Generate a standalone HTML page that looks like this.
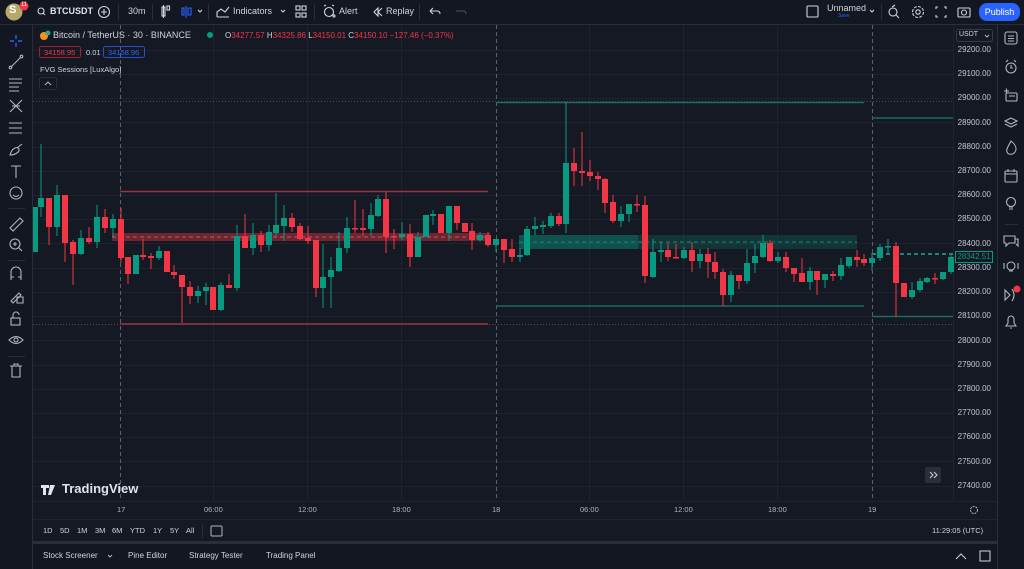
<!DOCTYPE html>
<html><head><meta charset="utf-8"><style>
*{margin:0;padding:0;box-sizing:border-box}
body{width:1024px;height:569px;background:#2a2e39;font-family:"Liberation Sans",sans-serif;color:#d1d4dc;overflow:hidden;position:relative;font-size:9px}
.a{position:absolute;white-space:nowrap}
svg{position:absolute}
</style></head><body>
<div class="a" style="left:0;top:0;width:1024px;height:24px;background:#131722"></div>
<div class="a" style="left:0;top:25px;width:32px;height:544px;background:#131722"></div>
<div class="a" style="left:998px;top:25px;width:26px;height:544px;background:#131722"></div>
<div class="a" style="left:33px;top:25px;width:964px;height:516px;background:#151924"></div>
<div class="a" style="left:33px;top:544px;width:964px;height:25px;background:#131722"></div>

<svg width="1024" height="569" style="left:0;top:0">
 <g stroke="#1f2330" stroke-width="1">
  <path d="M33 50.5H953M33 74.5H953M33 98.5H953M33 122.5H953M33 147.5H953M33 171.5H953M33 195.5H953M33 219.5H953M33 243.5H953M33 268.5H953M33 292.5H953M33 316.5H953M33 340.5H953M33 365.5H953M33 389.5H953M33 413.5H953M33 437.5H953M33 461.5H953M33 486.5H953"/>
  <path d="M213.5 25V500M307.5 25V500M401.5 25V500M589.5 25V500M683.5 25V500M777.5 25V500"/>
  <path d="M33 501.5H997M953.5 25V501M33 519.5H997"/>
 </g>
 <g stroke="#5d606b" stroke-dasharray="4 3"><path d="M120.5 25V500M496.5 25V500M872.5 25V500"/></g>
 <g stroke="#4a4e5a" stroke-dasharray="1 2"><path d="M33 101.5H953M33 324.5H953"/></g>
 <g stroke="#9a3440" stroke-width="1.5"><path d="M120 191.5H488M120 324H488"/></g>
 <rect x="112" y="233" width="378" height="8" fill="#f23645" opacity="0.4"/>
 <path d="M112 237H490" stroke="#e06b75" stroke-dasharray="4 3" opacity="0.7"/>
 <g stroke="#1d6b5e" stroke-width="1.5"><path d="M496 102.5H864M496 306H864M872 118H953M872 316.5H953"/></g>
 <rect x="519" y="235" width="119" height="14" fill="#089981" opacity="0.45"/>
 <rect x="638" y="235" width="219" height="14" fill="#089981" opacity="0.22"/>
 <path d="M519 242H857" stroke="#1a8a76" stroke-dasharray="4 3"/>
 <path d="M872 254H953" stroke="#1a8a76" stroke-width="2" stroke-dasharray="4 3"/>
 <g fill="#089981" stroke="#089981">
 <path stroke-width="1" d="M41 144V217M57 185V236M81 230V255M97 205V248M113 214V238M159 246V260M198 286V303M206 283V305M221 282V311M237 225V291M253 223V255M269 225V251M276 193V237M284 205V241M323 244V308M331 257V308M339 232V272M347 217V253M371 203V236M378 195V217M402 222V240M418 232V257M433 210V225M449 206V241M480 232V242M496 239V252M520 248V262M527 226V256M535 217V235M543 221V234M551 213V228M566 102V233M621 206V227M629 204V222M653 239V278M661 242V262M684 247V259M700 249V268M731 271V302M747 249V284M755 244V273M763 235V258M778 252V263M810 267V290M825 274V288M841 258V280M849 257V268M872 253V271M880 244V261M888 239V255M912 282V299M920 278V292M927 277V283M943 272V280M951 255V274"/>
 <g stroke="none">
 <rect x="33" y="207" width="5" height="45"/><rect x="38" y="198" width="6" height="9"/><rect x="54" y="195" width="6" height="32"/><rect x="78" y="238" width="6" height="16"/><rect x="94" y="217" width="6" height="25"/><rect x="110" y="219" width="6" height="9"/><rect x="133" y="255" width="6" height="19"/><rect x="156" y="251" width="6" height="7"/><rect x="195" y="291" width="6" height="5"/><rect x="203" y="287" width="6" height="4"/><rect x="218" y="285" width="6" height="25"/><rect x="234" y="236" width="6" height="52"/><rect x="250" y="235" width="6" height="13"/><rect x="266" y="232" width="6" height="13"/><rect x="273" y="225" width="6" height="8"/><rect x="281" y="218" width="6" height="8"/><rect x="320" y="277" width="6" height="11"/><rect x="328" y="270" width="6" height="7"/><rect x="336" y="248" width="6" height="23"/><rect x="344" y="228" width="6" height="20"/><rect x="368" y="215" width="6" height="14"/><rect x="375" y="199" width="6" height="17"/><rect x="399" y="234" width="6" height="3"/><rect x="415" y="237" width="6" height="20"/><rect x="423" y="215" width="6" height="22"/><rect x="430" y="214" width="6" height="2"/><rect x="446" y="206" width="6" height="27"/><rect x="477" y="235" width="6" height="5"/><rect x="493" y="239" width="6" height="6"/><rect x="517" y="255" width="6" height="2"/><rect x="524" y="229" width="6" height="26"/><rect x="532" y="226" width="6" height="3"/><rect x="540" y="225" width="6" height="2"/><rect x="548" y="216" width="6" height="10"/><rect x="563" y="163" width="6" height="61"/><rect x="618" y="214" width="6" height="7"/><rect x="626" y="204" width="6" height="10"/><rect x="650" y="252" width="6" height="25"/><rect x="658" y="250" width="6" height="2"/><rect x="681" y="250" width="6" height="8"/><rect x="697" y="254" width="6" height="7"/><rect x="728" y="275" width="6" height="20"/><rect x="744" y="263" width="6" height="18"/><rect x="752" y="256" width="6" height="7"/><rect x="760" y="243" width="6" height="14"/><rect x="775" y="257" width="6" height="4"/><rect x="807" y="271" width="6" height="11"/><rect x="822" y="274" width="6" height="6"/><rect x="838" y="265" width="6" height="11"/><rect x="846" y="257" width="6" height="9"/><rect x="869" y="258" width="6" height="5"/><rect x="877" y="247" width="6" height="11"/><rect x="885" y="246" width="6" height="1.5"/><rect x="909" y="290" width="6" height="7"/><rect x="917" y="281" width="6" height="9"/><rect x="924" y="278" width="6" height="4"/><rect x="940" y="272" width="6" height="7"/><rect x="948" y="257" width="6" height="15"/>
 </g></g>
 <g fill="#f23645" stroke="#f23645">
 <path stroke-width="1" d="M49 198V245M65 195V262M73 240V285M89 227V244M105 209V233M121 208V263M128 257V284M143 239V260M151 253V269M174 265V279M182 275V323M190 281V304M229 274V288M245 214V248M261 231V252M292 213V232M300 223V240M308 226V244M316 240V297M355 200V233M363 209V237M386 192V253M394 229V249M410 224V267M457 206V230M472 223V250M488 232V247M504 239V263M512 239V262M559 213V226M574 148V186M582 132V186M590 160V181M598 172V190M605 178V213M613 195V223M637 195V212M645 196V283M668 243V261M676 244V258M692 242V272M708 248V278M715 252V279M723 269V306M739 275V289M770 240V262M786 252V272M794 268V282M802 258V282M817 271V295M833 271V281M857 250V267M864 254V266M896 242V317M935 273V284"/>
 <g stroke="none">
 <rect x="46" y="198" width="6" height="29"/><rect x="62" y="195" width="6" height="48"/><rect x="70" y="242" width="6" height="12"/><rect x="86" y="238" width="6" height="4"/><rect x="102" y="217" width="6" height="11"/><rect x="118" y="219" width="6" height="39"/><rect x="125" y="257" width="6" height="17"/><rect x="140" y="255" width="6" height="2"/><rect x="148" y="256" width="6" height="2"/><rect x="164" y="251" width="6" height="21"/><rect x="171" y="272" width="6" height="3"/><rect x="179" y="275" width="6" height="12"/><rect x="187" y="287" width="6" height="9"/><rect x="210" y="287" width="6" height="23"/><rect x="226" y="285" width="6" height="3"/><rect x="242" y="236" width="6" height="12"/><rect x="258" y="235" width="6" height="10"/><rect x="289" y="218" width="6" height="9"/><rect x="297" y="226" width="6" height="13"/><rect x="305" y="238" width="6" height="3"/><rect x="313" y="240" width="6" height="48"/><rect x="352" y="228" width="6" height="1.5"/><rect x="360" y="228" width="6" height="2"/><rect x="383" y="199" width="6" height="38"/><rect x="391" y="236" width="6" height="1.5"/><rect x="407" y="234" width="6" height="23"/><rect x="438" y="214" width="6" height="19"/><rect x="454" y="206" width="6" height="17"/><rect x="462" y="223" width="6" height="9"/><rect x="469" y="231" width="6" height="9"/><rect x="485" y="235" width="6" height="10"/><rect x="501" y="239" width="6" height="11"/><rect x="509" y="249" width="6" height="8"/><rect x="556" y="216" width="6" height="8"/><rect x="571" y="163" width="6" height="8"/><rect x="579" y="171" width="6" height="2"/><rect x="587" y="172" width="6" height="4"/><rect x="595" y="176" width="6" height="3"/><rect x="602" y="179" width="6" height="24"/><rect x="610" y="202" width="6" height="19"/><rect x="634" y="204" width="6" height="1.5"/><rect x="642" y="205" width="6" height="71"/><rect x="665" y="250" width="6" height="7"/><rect x="673" y="257" width="6" height="1.5"/><rect x="689" y="250" width="6" height="11"/><rect x="705" y="254" width="6" height="8"/><rect x="712" y="262" width="6" height="10"/><rect x="720" y="272" width="6" height="23"/><rect x="736" y="275" width="6" height="6"/><rect x="767" y="243" width="6" height="18"/><rect x="783" y="257" width="6" height="11"/><rect x="791" y="268" width="6" height="6"/><rect x="799" y="273" width="6" height="9"/><rect x="814" y="271" width="6" height="9"/><rect x="830" y="274" width="6" height="2"/><rect x="854" y="257" width="6" height="3"/><rect x="861" y="259" width="6" height="4"/><rect x="893" y="246" width="6" height="37"/><rect x="901" y="283" width="6" height="14"/><rect x="932" y="278" width="6" height="1.5"/>
 </g></g>
 <rect x="955.5" y="251.5" width="37" height="11" fill="#151924" stroke="#089981"/>
 <g fill="none" stroke="#b2b5be" stroke-width="1.1">
  <path d="M16 35V39M16 43V47M10 41H14M18 41H22" stroke="#2962ff" stroke-width="1.4"/>
  <path d="M11 67L21 57"/><circle cx="10.5" cy="67.5" r="1.3"/><circle cx="21.5" cy="56.5" r="1.3"/>
  <path d="M9 79H22M9 83H22M9 87H19M9 91H19"/>
  <path d="M10 100L22 112M22 100L10 112M12 106H20"/>
  <path d="M9 123H22M9 128H22M9 133H22"/>
  <path d="M10 155C12 148 17 146 19 149C20 152 15 155 10 155ZM17 148L22 144"/>
  <path d="M11 166H21M16 166V178"/>
  <circle cx="16" cy="193" r="6"/><path d="M13 195Q16 198 19 195"/>
  <path d="M10 228L20 218L23 221L13 231Z"/>
  <circle cx="15" cy="244" r="5"/><path d="M19 248L22 251M13 244H17M15 242V246"/>
  <path d="M11 280V272A5 5 0 0 1 21 272V280M11 277H14M18 277H21"/>
  <path d="M11 301L19 293L21 295L13 303ZM17 297H23V303H17Z"/>
  <rect x="11" y="318" width="9" height="7"/><path d="M13 318V315A3 3 0 0 1 19 315"/>
  <path d="M9 340Q16 333 23 340Q16 347 9 340Z"/><circle cx="16" cy="340" r="2"/>
  <path d="M10 366H22M12 366V377H20V366M14 366V364H18V366"/>
 </g>
 <g stroke="#2a2e39"><path d="M8 208.5H25M8 260.5H25M8 356.5H25M1005 224.5H1018"/></g>
 <g fill="none" stroke="#b2b5be" stroke-width="1.1">
  <rect x="1005" y="32" width="12" height="12" rx="2"/><path d="M1008 36H1014M1008 38.5H1014M1008 41H1014"/>
  <circle cx="1011" cy="68" r="5"/><path d="M1011 65V68H1013M1006 62L1008 60M1016 62L1014 60"/>
  <rect x="1006" y="93" width="11" height="8" rx="1"/><path d="M1004 91H1009M1006.5 88.5V93.5M1009 96H1015"/>
  <path d="M1005 121L1011 118L1017 121L1011 124ZM1005 124L1011 127L1017 124"/>
  <path d="M1011 141C1016 145 1017 149 1015 152C1013 155 1008 155 1007 152C1006 149 1008 147 1011 141Z"/>
  <rect x="1005" y="171" width="12" height="11" rx="1"/><path d="M1005 174H1017M1008 169V172M1014 169V172"/>
  <circle cx="1011" cy="202" r="4.5"/><path d="M1009 207H1013M1009 209H1013"/>
  <path d="M1004 236H1015V243H1009L1006 246V243H1004ZM1015 239H1018V246L1016 244"/>
  <circle cx="1011" cy="266" r="4"/><path d="M1009 271H1013M1004 263V269M1018 263V269"/>
  <path d="M1005 290L1010 295L1005 300ZM1012 289Q1016 295 1012 301"/>
  <path d="M1006 326H1016L1014 323V319A3 3 0 0 0 1008 319V323ZM1010 328H1012"/>
 </g>
 <circle cx="1017" cy="289" r="3.5" fill="#f23645"/>
 <circle cx="14" cy="12" r="8.5" fill="#b5a96a"/>
 <circle cx="24" cy="6" r="4.5" fill="#f23645"/>
 <g fill="none" stroke="#d1d4dc" stroke-width="1.1">
  <circle cx="41" cy="11" r="3"/><path d="M43 13L45 15"/>
  <circle cx="104" cy="12" r="5.5"/><path d="M104 9V15M101 12H107"/>
  <rect x="162" y="7" width="3" height="9"/><path d="M163.5 5V18"/><rect x="167" y="6" width="2.5" height="4"/>
  <path d="M198 10L200 12L202 10M281 10L283 12L285 10M870 10L872 12L874 10"/>
  <path d="M217 17V12L221 9L225 12L229 7M217 17H229"/>
  <rect x="296" y="6" width="4" height="4"/><rect x="302" y="6" width="4" height="4"/><rect x="296" y="13" width="4" height="4"/><rect x="302" y="13" width="4" height="4"/>
  <circle cx="329" cy="12" r="4.5"/><path d="M324 6L326 5M334 6L332 5M332 16H336M334 14V18"/>
  <path d="M378 8L374 12L378 16ZM382 8L378 12L382 16"/>
  <path d="M430 11H437Q440 11 440 14M430 11L433 8M430 11L433 14"/>
  <rect x="807" y="6" width="11" height="11" rx="1"/>
  <circle cx="893" cy="12" r="4"/><path d="M896 15L899 18M892 7L895 5"/>
  <circle cx="918" cy="12" r="2.2"/><circle cx="918" cy="12" r="5.5" stroke-dasharray="3 1.3"/>
  <path d="M936 9V7H938M944 7H946V9M946 15V17H944M938 17H936V15"/>
  <rect x="958" y="8" width="12" height="9" rx="1"/><circle cx="964" cy="12.5" r="2.5"/>
 </g>
 <path d="M456 11H463Q466 11 466 14" fill="none" stroke="#50535e"/>
 <path d="M186 6V18M182 8H184V15H182ZM188 8H191V15H188Z" fill="none" stroke="#2962ff" stroke-width="1.1"/>
 <g stroke="#2a2e39"><path d="M118.5 4V20M152.5 4V20M208.5 4V20M314.5 4V20M419.5 4V20M881.5 4V20M202.5 524V538"/></g>
 <circle cx="44" cy="36" r="4" fill="#f7931a"/><circle cx="48" cy="33" r="2.5" fill="#26a69a"/>
 <circle cx="210" cy="35" r="3" fill="#089981"/>
 <rect x="39.5" y="46.5" width="41" height="11" rx="2" fill="none" stroke="#a1212e"/>
 <rect x="103.5" y="46.5" width="41" height="11" rx="2" fill="none" stroke="#2a4fc7"/>
 <rect x="39.5" y="77.5" width="17" height="12" rx="2" fill="#131722" stroke="#2a2e39"/>
 <path d="M45 85L48 82L51 85" fill="none" stroke="#b2b5be"/>
 <rect x="956.5" y="29.5" width="36" height="12" rx="2" fill="#151924" stroke="#363a45"/>
 <path d="M985 35L987 37L989 35" fill="none" stroke="#b2b5be"/>
 <rect x="925" y="467" width="16" height="16" rx="2" fill="#2a2e39"/>
 <path d="M930 472L933 475L930 478M934 472L937 475L934 478" fill="none" stroke="#d1d4dc"/>
 <circle cx="974" cy="510" r="3.5" fill="none" stroke="#b2b5be" stroke-dasharray="2 1"/>
 <rect x="211" y="526" width="11" height="10" rx="1" fill="none" stroke="#b2b5be"/>
 <path d="M41 485H49V488H46V495H43V488H41ZM50 485H55L51 495H48Z" fill="#e0e3eb"/>
 <circle cx="51.5" cy="486.5" r="1.5" fill="#e0e3eb"/>
 <path d="M108 555L110 557L112 555" fill="none" stroke="#b2b5be"/>
 <path d="M956 559L961 554L966 559" fill="none" stroke="#d1d4dc"/>
 <rect x="980" y="551" width="10" height="10" fill="none" stroke="#d1d4dc"/>
</svg>

<div class="a" style="left:9px;top:4px;font-size:11px;font-weight:bold;color:#fff">S</div>
<div class="a" style="left:21px;top:2px;font-size:6px;color:#fff">11</div>
<div class="a" style="left:50px;top:6px;font-size:9px;font-weight:bold;color:#e0e3eb">BTCUSDT</div>
<div class="a" style="left:128px;top:6px;font-size:9px;color:#d1d4dc">30m</div>
<div class="a" style="left:233px;top:6px;font-size:9px;color:#d1d4dc">Indicators</div>
<div class="a" style="left:339px;top:6px;font-size:9px;color:#d1d4dc">Alert</div>
<div class="a" style="left:386px;top:6px;font-size:9px;color:#d1d4dc">Replay</div>
<div class="a" style="left:827px;top:3px;font-size:9px;color:#d1d4dc">Unnamed</div>
<div class="a" style="left:838px;top:13px;font-size:5px;color:#2962ff">Save</div>
<div class="a" style="left:979px;top:3px;width:41px;height:18px;background:#2962ff;border-radius:8px;color:#fff;font-size:9px;text-align:center;line-height:18px">Publish</div>

<div class="a" style="left:53px;top:30px;font-size:9px;color:#d1d4dc">Bitcoin / TetherUS · 30 · BINANCE</div>
<div class="a" style="left:225px;top:31px;font-size:8px;color:#f23645"><span style="color:#d1d4dc">O</span>34277.57 <span style="color:#d1d4dc">H</span>34325.86 <span style="color:#d1d4dc">L</span>34150.01 <span style="color:#d1d4dc">C</span>34150.10 −127.46 (−0.37%)</div>
<div class="a" style="left:44px;top:48px;font-size:7.5px;color:#f23645">34158.95</div>
<div class="a" style="left:86px;top:48px;font-size:7.5px;color:#d1d4dc">0.01</div>
<div class="a" style="left:108px;top:48px;font-size:7.5px;color:#2962ff">34158.96</div>
<div class="a" style="left:40px;top:65px;font-size:7.5px;color:#d1d4dc">FVG Sessions [LuxAlgo]</div>

<div class="a" style="left:959px;top:31px;font-size:7px;color:#d1d4dc">USDT</div>
<div class="a" style="left:954px;top:37.9px;width:37px;text-align:right;font-size:8px;line-height:24.22px;color:#c3c6ce">
29200.00<br>29100.00<br>29000.00<br>28900.00<br>28800.00<br>28700.00<br>28600.00<br>28500.00<br>28400.00<br>28300.00<br>28200.00<br>28100.00<br>28000.00<br>27900.00<br>27800.00<br>27700.00<br>27600.00<br>27500.00<br>27400.00</div>
<div class="a" style="left:956px;top:252px;width:36px;height:10px;text-align:center;font-size:8px;line-height:10px;color:#089981;background:#151924">28342.51</div>

<div class="a" style="left:62px;top:481px;font-size:13px;font-weight:bold;color:#e0e3eb">TradingView</div>

<div class="a" style="top:505px;left:0;font-size:7.5px;color:#b2b5be">
<span class="a" style="left:117px">17</span><span class="a" style="left:204px">06:00</span><span class="a" style="left:298px">12:00</span><span class="a" style="left:392px">18:00</span><span class="a" style="left:492px">18</span><span class="a" style="left:580px">06:00</span><span class="a" style="left:674px">12:00</span><span class="a" style="left:768px">18:00</span><span class="a" style="left:868px">19</span></div>

<div class="a" style="top:526px;left:0;font-size:7.5px;color:#d1d4dc">
<span class="a" style="left:43px">1D</span><span class="a" style="left:60px">5D</span><span class="a" style="left:77px">1M</span><span class="a" style="left:95px">3M</span><span class="a" style="left:112px">6M</span><span class="a" style="left:130px">YTD</span><span class="a" style="left:153px">1Y</span><span class="a" style="left:170px">5Y</span><span class="a" style="left:186px">All</span><span class="a" style="left:932px">11:29:05 (UTC)</span></div>

<div class="a" style="top:551px;left:0;font-size:8px;color:#d1d4dc">
<span class="a" style="left:43px">Stock Screener</span><span class="a" style="left:128px">Pine Editor</span><span class="a" style="left:189px">Strategy Tester</span><span class="a" style="left:266px">Trading Panel</span></div>
</body></html>
